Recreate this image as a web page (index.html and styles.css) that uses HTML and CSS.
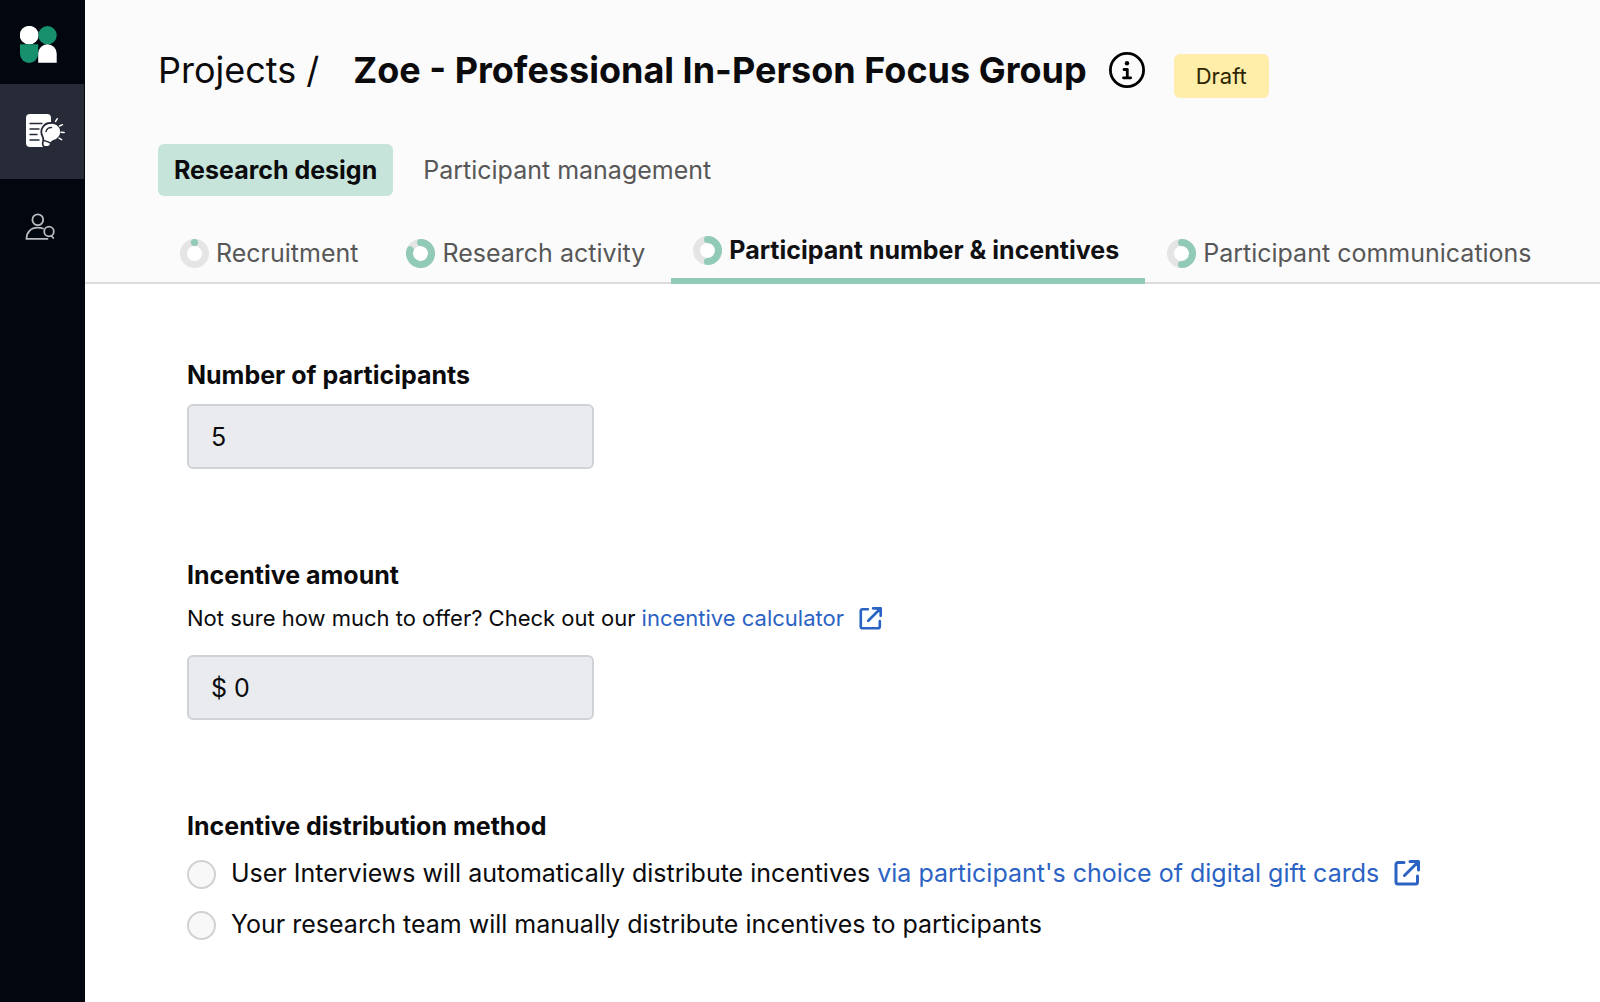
FILE: index.html
```
<!DOCTYPE html>
<html lang="en">
	<head>
		<meta charset="UTF-8">
		<title>Zoe - Professional In-Person Focus Group</title>
		<link rel="stylesheet" href="styles.css">
	</head>
	<body>
		<nav class="sidebar" aria-label="Main">
			<a class="logo" href="#" aria-label="Home">
				<svg width="38" height="38" viewBox="0 0 38 38">
					<circle cx="9.2" cy="9.2" r="9.4" fill="#fff"/>
					<circle cx="27.500" cy="9.2" r="9.2" fill="#16906d"/>
					<path d="M0 18.200h18.200v9.600a9.100 9.100 0 0 1-18.200 0z" fill="#16906d"/>
					<path d="M18.200 36.800v-9.300a9.250 9.250 0 0 1 18.500 0v9.300z" fill="#fff"/>
				</svg>
			</a>
			<a class="side-link active" href="#" aria-label="Projects">
				<svg width="40" height="36" viewBox="0 0 40 36">
					<rect x="1" y="0" width="25" height="33" rx="4" fill="#fff"/>
					<path d="M5 9.500h12M5 15h9M5 20.500h7M5 26h9" stroke="#262b37" stroke-width="1.400" stroke-linecap="round"/>
					<path d="M25.500 9a8.800 8.800 0 0 0-8.300 12.500c1.500 3 1.500 4 .8 6-1 2.500 0 5 2 5.500h3c2 0 2.500-1 3-3.500.3-1.500 1-2 2.500-2.700a8.900 8.900 0 0 0-3-17.800z" fill="#fff" stroke="#262b37" stroke-width="1.800"/>
					<path d="M21 17.500a5.500 5.500 0 0 1 5.500-4M18.500 26.500q3 .5 7 2.500" fill="none" stroke="#262b37" stroke-width="1.400" stroke-linecap="round"/>
					<path d="M30.500 7.500l1.800-2.800M34.500 12l3-1.300M36 18.300l3.200.2M34 24.200l2.700 1.500" stroke="#fff" stroke-width="1.400" stroke-linecap="round"/>
				</svg>
			</a>
			<a class="side-link" href="#" aria-label="Participants">
				<svg width="30" height="27" viewBox="0 0 30 27" fill="none" stroke="#b9bbbe" stroke-width="1.800" stroke-linecap="round">
					<circle cx="12.800" cy="6.800" r="5.400"/>
					<path d="M18 15.500c-1.500-.6-3-.8-5.300-.8-7 0-11.200 4.500-11.200 11.100h21"/>
					<circle cx="24" cy="18.500" r="4.800"/>
					<path d="M26.500 23l1.800 2"/>
				</svg>
			</a>
		</nav>
		<div class="page">
			<header class="header">
				<div class="title-row">
					<a class="crumb" href="#">Projects /</a>
					<h1 class="title">Zoe - Professional In-Person Focus Group</h1>
					<button class="info" type="button" aria-label="Project info">
						<svg width="36" height="36" viewBox="0 0 36 36" fill="none" stroke="#000" stroke-width="2.800" stroke-linecap="round" stroke-linejoin="round">
							<circle cx="18" cy="18" r="16.600"/>
							<circle cx="18" cy="11.200" r="2.200" fill="#000" stroke="none"/>
							<path d="M15 17.500h3.300v8.300M14.500 25.800h7.200"/>
						</svg>
					</button>
					<span class="badge">Draft</span>
				</div>
				<nav class="sections" aria-label="Sections">
					<a class="section active" href="#">Research design</a>
					<a class="section" href="#">Participant management</a>
				</nav>
				<nav class="steps" aria-label="Steps">
					<a class="step" href="#">
						<svg class="ring" viewBox="0 0 29 29">
							<circle class="ring-track" cx="14.500" cy="14.500" r="11"/>
							<path class="ring-value" d="M14.400 3.500h.2"/>
						</svg>
						Recruitment
					</a>
					<a class="step" href="#">
						<svg class="ring" viewBox="0 0 29 29">
							<circle class="ring-track" cx="14.500" cy="14.500" r="11"/>
							<path class="ring-value" d="M14.500 3.500a11 11 0 1 1-10.300 7.200"/>
						</svg>
						Research activity
					</a>
					<a class="step active" href="#" aria-current="step">
						<svg class="ring" viewBox="0 0 29 29">
							<circle class="ring-track" cx="14.500" cy="14.500" r="11"/>
							<path class="ring-value" d="M14.500 3.500a11 11 0 0 1 0 22"/>
						</svg>
						Participant number &amp; incentives
					</a>
					<a class="step" href="#">
						<svg class="ring" viewBox="0 0 29 29">
							<circle class="ring-track" cx="14.500" cy="14.500" r="11"/>
							<path class="ring-value" d="M14.500 3.500a11 11 0 0 1 0 22"/>
						</svg>
						Participant communications
					</a>
				</nav>
			</header>
			<main class="content">
				<form class="form">
					<div class="field">
						<label class="label" for="participants">Number of participants</label>
						<input class="input" id="participants" type="text" value="5">
					</div>
					<div class="field">
						<label class="label" for="amount">Incentive amount</label>
						<p class="help">Not sure how much to offer? Check out our <a class="link" href="#">incentive calculator<svg class="ext ext-small" viewBox="0 0 26 26"><path d="M10 2.500H4a2 2 0 0 0-2 2V22a2 2 0 0 0 2 2h17.500a2 2 0 0 0 2-2v-6M16 1.500h8.500V10M24 2L10.500 15.500"/></svg></a></p>
						<input class="input" id="amount" type="text" value="$ 0">
					</div>
					<fieldset class="field">
						<legend class="label">Incentive distribution method</legend>
						<div class="option">
							<input class="radio" type="radio" name="method" id="auto">
							<label for="auto">User Interviews will automatically distribute incentives <a class="link" href="#">via participant's choice of digital gift cards<svg class="ext" viewBox="0 0 26 26"><path d="M10 2.500H4a2 2 0 0 0-2 2V22a2 2 0 0 0 2 2h17.500a2 2 0 0 0 2-2v-6M16 1.500h8.500V10M24 2L10.500 15.500"/></svg></a></label>
						</div>
						<div class="option">
							<input class="radio" type="radio" name="method" id="manual">
							<label for="manual">Your research team will manually distribute incentives to participants</label>
						</div>
					</fieldset>
				</form>
			</main>
		</div>
	</body>
</html>
```

FILE: styles.css
```
*{
	margin: 0;
	padding: 0;
	box-sizing: border-box;
}
body{
	display: flex;
	min-height: 100vh;
	font-family: Inter, "Liberation Sans", sans-serif;
	font-size: 25px;
	line-height: 32px;
	color: #0b0b0d;
	background-color: #fff;
}
a{
	color: inherit;
	text-decoration: none;
}
svg{
	flex: none;
}

/* sidebar */
.sidebar{
	flex: none;
	width: 85px;
	padding-right: 1px;
	background-color: #01060f;
}
.logo{
	display: flex;
	height: 84px;
	padding: 26px 0 0 20px;
}
.side-link{
	display: flex;
	align-items: center;
	height: 95px;
	padding-left: 25px;
}
.side-link.active{
	background-color: #262b37;
}

/* header */
.page{
	flex: 1;
	min-width: 0;
}
.header{
	padding-top: 44px;
	background-color: #fbfbfb;
	border-bottom: 2px solid #dcdcdc;
}
.title-row{
	display: flex;
	align-items: center;
	height: 52px;
	padding-left: 73px;
	white-space: nowrap;
}
.crumb{
	font-size: 36px;
	margin-right: 34px;
}
.title{
	font-size: 36px;
	font-weight: 700;
	margin-right: 22px;
}
.info{
	display: flex;
	border: 0;
	background: none;
	margin-right: 29px;
}
.badge{
	margin-top: 12px;
	padding: 6px 22px;
	border-radius: 6px;
	font-size: 22px;
	background-color: #ffedaa;
	color: #2e2500;
}
.sections{
	display: flex;
	gap: 14px;
	margin-top: 48px;
	padding-left: 73px;
	color: #575757;
}
.section{
	padding: 10px 16px;
	border-radius: 6px;
}
.section.active{
	font-weight: 700;
	color: #0b0b0d;
	background-color: #c6e4da;
}
.steps{
	display: flex;
	height: 88px;
	margin-bottom: -2px;
	padding-left: 73px;
	white-space: nowrap;
	color: #575757;
}
.step{
	display: flex;
	align-items: center;
	gap: 7px;
	padding: 26px 26px 0 22px;
}
.step.active{
	font-weight: 700;
	color: #111113;
	border-bottom: 6px solid #91cab7;
}
.ring{
	width: 29px;
	height: 29px;
	fill: none;
	stroke-width: 7;
	stroke-linecap: round;
}
.ring-track{
	fill: #fff;
	stroke: #e5e5e5;
}
.ring-value{
	stroke: #91cab7;
}

/* form */
.form{
	display: flex;
	flex-direction: column;
	gap: 90px;
	padding: 75px 40px 40px 102px;
}
.field{
	border: 0;
}
.label{
	display: block;
	font-weight: 700;
}
.help{
	margin-top: 11px;
	font-size: 22px;
}
.input{
	display: block;
	width: 407px;
	height: 65px;
	margin-top: 13px;
	padding: 0 22px;
	border: 2px solid #cfd2d6;
	border-radius: 6px;
	background-color: #e9ebef;
	color: inherit;
	font: inherit;
}
.help + .input{
	margin-top: 21px;
}
.link{
	color: #2b63c4;
}
.ext{
	width: 26px;
	height: 26px;
	margin-left: 15px;
	vertical-align: -4px;
	fill: none;
	stroke: #2b63c4;
	stroke-width: 3;
	stroke-linecap: round;
	stroke-linejoin: round;
}
.ext-small{
	width: 23px;
	height: 23px;
}
.option{
	display: flex;
	align-items: center;
	gap: 15px;
	margin-top: 17px;
}
.label + .option{
	margin-top: 15px;
}
.option label{
	padding-bottom: 2px;
}
.radio{
	flex: none;
	width: 29px;
	height: 29px;
	appearance: none;
	border: 2px solid #d2d2d2;
	border-radius: 50%;
	background-color: #f8f8f8;
}
.radio:checked{
	border: 9px solid #16906d;
}
```
